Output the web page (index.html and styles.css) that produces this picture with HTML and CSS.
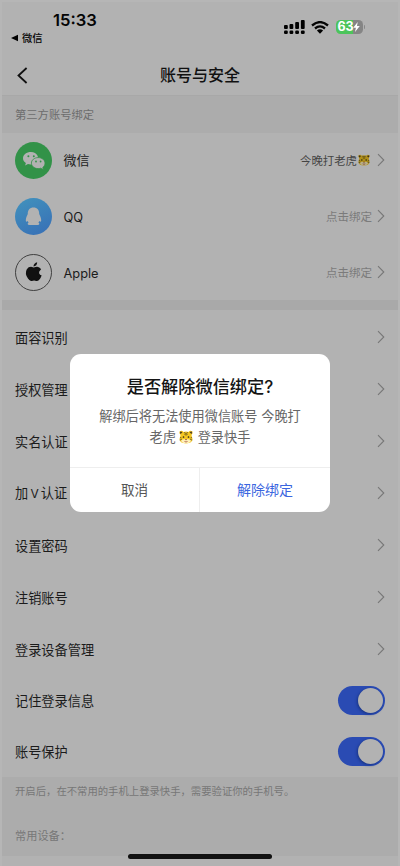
FILE: index.html
```html
<!DOCTYPE html>
<html lang="zh-CN">
<head>
<meta charset="utf-8">
<title>账号与安全</title>
<link rel="stylesheet" href="styles.css">
</head>
<body>
<svg class="defs" width="0" height="0">
  <symbol id="chevron" viewBox="0 0 8 14"><path d="M1 1.2 6.8 7 1 12.8" fill="none" stroke="currentColor" stroke-width="1.1"/></symbol>
  <symbol id="tiger" viewBox="0 0 28 28">
    <path d="M1 3q5-3 8 1 5-2 10 0 3-4 8-1 1 4-2 7l2 8q0 8-13 9Q1 26 1 18l2-8Q0 7 1 3Z" fill="#f5c722"/>
    <path d="M2 3.500q3-1 5 1.500l-4 3Q1 6 2 3.500ZM26 3.500q-3-1-5 1.500l4 3q2-2 1-4.500Z" fill="#544322"/>
    <path d="M4 21q5-4 10-2 5-2 10 2-2 5-10 6-8-1-10-6Z" fill="#fff1bc"/>
    <path d="M10 5l4 2 4-2M11 9l3 1 3-1M2 15l3 1M1.500 20l4-1M26 15l-3 1M26.500 20l-4-1" fill="none" stroke="#34301d" stroke-width="1.300"/>
    <circle cx="9" cy="14" r="1.7" fill="#26231c"/><circle cx="19" cy="14" r="1.7" fill="#26231c"/>
    <path d="M12 18h4l-2 3Z" fill="#8d4438"/><path d="M11 23q3 2 6 0" fill="none" stroke="#a34b35" stroke-width="1.600"/>
  </symbol>
</svg>
<div class="screen">
  <header class="top">
    <div class="status">
      <div class="clock"><div class="time">15:33</div><div class="back-app"><svg width="8" height="8" viewBox="0 0 8 8"><path d="M0 4 7 .7v6.6Z"/></svg>微信</div></div>
      <div class="indicators">
        <svg class="signal" width="22" height="15" viewBox="0 0 22 15"><g><rect x="0" y="5" width="3.8" height="4" rx="1"/><rect x="5.5" y="4" width="3.8" height="5" rx="1"/><rect x="11.2" y="2" width="3.8" height="7" rx="1"/><rect x="16.9" y="0" width="3.8" height="9" rx="1"/><rect x="0" y="10.5" width="3.8" height="3.5" rx="1.2"/><rect x="5.5" y="10.5" width="3.8" height="3.5" rx="1.2"/><rect x="11.2" y="10.5" width="3.8" height="3.5" rx="1.2"/><rect x="16.9" y="10.5" width="3.8" height="3.5" rx="1.2"/></g></svg>
        <svg class="wifi" width="18" height="13" viewBox="0 0 18 13"><path d="M1 4.5Q9-2.3 17 4.5M4 7.5q5-4.2 10 0" fill="none" stroke="#050505" stroke-width="2.3"/><path d="M5.9 9.6q3.1-2.5 6.2 0L9 12.8Z"/></svg>
        <div class="battery"><span>63</span><svg width="7" height="10" viewBox="0 0 7 10"><path d="M4.7 0 .2 5.7h2.7L2 10l4.8-6H4Z" fill="#fff"/></svg></div><i class="battery-tip"></i>
      </div>
    </div>
    <div class="nav"><svg width="11" height="17" viewBox="0 0 11 17"><path d="M9.6 1 1.5 8.5l8.1 7.5" fill="none" stroke="#111" stroke-width="1.8"/></svg><h1>账号与安全</h1></div>
  </header>
  <div class="section-title">第三方账号绑定</div>
  <section class="accounts">
    <div class="account">
      <svg class="logo" viewBox="0 0 37 37"><circle cx="18.5" cy="18.5" r="18.5" fill="#329248"/><path d="M16 10.1c-4.5 0-8 2.7-8 6.2 0 2 1.1 3.700 2.900 4.800l-.8 2.400 2.900-1.500q1.400.5 3.500.4h4C26 16 22 10.100 16 10.100Z" fill="#b2b2b2"/><path d="M23.2 15.6c-3.9 0-6.8 2.5-6.8 5.5s2.9 5.5 6.8 5.5q1.3 0 2.4-.4l2.8 1.4-.6-2.2c1.4-1 2.2-2.6 2.2-4.3 0-3-2.9-5.5-6.8-5.5Z" fill="#b2b2b2" stroke="#329248" stroke-width=".8"/><g fill="#329248"><circle cx="13.4" cy="14.2" r="1"/><circle cx="18.8" cy="14.2" r="1"/><circle cx="21" cy="19.5" r=".9"/><circle cx="25.6" cy="19.5" r=".9"/></g></svg>
      <span class="name">微信</span><span class="value bound">今晚打老虎<svg class="tiger dim" width="12" height="12"><use href="#tiger"/></svg></span><svg class="chevron"><use href="#chevron"/></svg>
    </div>
    <div class="account">
      <svg class="logo" viewBox="0 0 37 37"><defs><linearGradient id="qq" x2="0.5" y2="1"><stop stop-color="#4293bd"/><stop offset="1" stop-color="#3974b7"/></linearGradient></defs><circle cx="18.5" cy="18.5" r="18.5" fill="url(#qq)"/><path d="M18.5 9.500c-3.700 0-5.900 2.700-5.700 6.500-.9 2-2 4-2 6.300 0 1.600.8 1.900 1.900.6q.2.900.9 1.700c-1.500.8-1.200 2.400.7 2.400h8.400c1.900 0 2.200-1.600.7-2.400q.7-.8.9-1.700c1.100 1.300 1.900 1 1.900-.6 0-2.300-1.100-4.300-2-6.300.2-3.800-2-6.500-5.700-6.500Z" fill="#b2b2b2"/></svg>
      <span class="name latin">QQ</span><span class="value">点击绑定</span><svg class="chevron"><use href="#chevron"/></svg>
    </div>
    <div class="account">
      <svg class="logo" viewBox="0 0 37 37"><circle cx="18.5" cy="18.5" r="18" fill="none" stroke="#333" stroke-width=".9"/><g transform="translate(-3.6 -2.2) scale(1.13)"><path transform="translate(9.6 8.6) scale(.76)" d="M18.7 12.7c0-2.4 2-3.6 2.1-3.7-1.2-1.7-3-1.9-3.6-2-1.5-.2-3 .9-3.8.9s-2-.9-3.2-.9c-1.7 0-3.2 1-4.1 2.4-1.7 3-.4 7.5 1.3 10 .8 1.2 1.8 2.5 3.1 2.5s1.7-.8 3.3-.8c1.5 0 1.900.8 3.200.8s2.200-1.200 3-2.400c1-1.400 1.400-2.700 1.400-2.800-.1 0-2.700-1-2.700-4Z" fill="#111" stroke="#111" stroke-width="1.8"/><path d="M19.500 13c0-2 1.500-3.300 3.300-3.700.1 2-1.200 3.600-3.300 3.700Z" fill="#111"/></g></svg>
      <span class="name latin">Apple</span><span class="value">点击绑定</span><svg class="chevron"><use href="#chevron"/></svg>
    </div>
  </section>
  <div class="divider"></div>
  <section class="settings">
    <div class="row"><span>面容识别</span><svg class="chevron"><use href="#chevron"/></svg></div>
    <div class="row"><span>授权管理</span><svg class="chevron"><use href="#chevron"/></svg></div>
    <div class="row"><span>实名认证</span><svg class="chevron"><use href="#chevron"/></svg></div>
    <div class="row"><span>加<b class="vee">V</b>认证</span><svg class="chevron"><use href="#chevron"/></svg></div>
    <div class="row"><span>设置密码</span><svg class="chevron"><use href="#chevron"/></svg></div>
    <div class="row"><span>注销账号</span><svg class="chevron"><use href="#chevron"/></svg></div>
    <div class="row"><span>登录设备管理</span><svg class="chevron"><use href="#chevron"/></svg></div>
    <div class="row toggle-row"><span>记住登录信息</span><i class="toggle"></i></div>
    <div class="row toggle-row"><span>账号保护</span><i class="toggle"></i></div>
  </section>
  <footer class="note"><p>开启后，在不常用的手机上登录快手，需要验证你的手机号。</p><p class="devices">常用设备：</p></footer>
  <div class="home"></div>
  <div class="dialog">
    <div class="message"><h2>是否解除微信绑定?</h2><p>解绑后将无法使用微信账号 今晚打<br>老虎<svg class="tiger" width="14" height="14"><use href="#tiger"/></svg> 登录快手</p></div>
    <div class="actions"><div class="cancel">取消</div><div class="confirm">解除绑定</div></div>
  </div>
</div>
</body>
</html>
```

FILE: styles.css
```css
* { box-sizing: border-box; }
body { margin: 0; font-family: Inter, "Noto Sans CJK SC", sans-serif; background: #b2b2b2; }
h1, h2, p { margin: 0; }
.defs { position: absolute; }
.screen { position: relative; width: 400px; height: 866px; overflow: hidden; background: #b2b2b2; color: #1b1b1b; border: 0 solid #b6b6b6; border-width: 2px 2px 0; display: flex; flex-direction: column; }
.top { height: 93px; flex: none; }
.status { height: 48px; display: flex; justify-content: space-between; color: #050505; }
.clock { padding-left: 9px; }
.time { padding-left: 42px; margin-top: 8px; font-size: 16.6px; line-height: 20px; font-weight: 600; }
.back-app { display: flex; align-items: center; gap: 3px; font-size: 10.3px; line-height: 14px; margin-top: 1px; font-weight: 500; }
.indicators { display: flex; align-items: center; height: 16px; margin-top: 17px; padding-right: 33px; }
.wifi { margin-left: 5px; }
.battery { margin-left: 7px; width: 27px; height: 14px; border-radius: 4.5px; display: flex; align-items: center; justify-content: center; background: linear-gradient(90deg, #4cc45b 63%, #858585 63%); color: #fff; font-size: 12.5px; line-height: 14px; font-weight: 700; letter-spacing: -.2px; }
.battery-tip { width: 1.5px; height: 4px; margin-left: 1px; border-radius: 0 2px 2px 0; background: #888; }
.nav { display: flex; align-items: center; height: 30px; margin-top: 10px; padding-left: 15px; }
.nav svg { margin-top: 1px; }
.nav h1 { margin: 0 0 0 132px; font-size: 16px; line-height: 24px; font-weight: 500; color: #111; }
.section-title { height: 38px; flex: none; background: #acacac; border-top: 1px solid #a8a8a8; padding-left: 13px; line-height: 38px; font-size: 11.3px; color: #6d6d6d; }
.accounts { height: 167px; flex: none; }
.account { height: 56px; display: flex; align-items: center; padding: 0 13px; }
.account > * { position: relative; top: -.6px; }
.logo { width: 37px; height: 37px; }
.name { margin-left: 11.5px; font-size: 13px; line-height: 20px; }
.account .latin { font-size: 12.8px; top: .6px; }
.value { margin-left: auto; display: flex; align-items: center; font-size: 11.5px; color: #7b7b7b; }
.bound { color: #444; font-size: 11.4px; }
.tiger { flex: none; }
.bound .tiger { margin: 0 2px 0 1px; }
.dim { filter: brightness(.72); }
.chevron { width: 8px; height: 14px; color: #777; flex: none; }
.account .chevron { margin-left: 5px; }
.divider { height: 10px; flex: none; background: #a9a9a9; }
.settings { padding-top: 1.5px; height: 467px; flex: none; }
.row { display: flex; justify-content: space-between; align-items: center; height: 52px; padding: 0 13px; font-size: 13.2px; line-height: 20px; }
.row .chevron, .toggle { margin-bottom: 1.5px; }
.vee { font-size: 12px; font-weight: 400; margin: 0 2.2px; }
.toggle-row { height: 51px; }
.toggle { width: 47px; height: 29px; border-radius: 15px; background: #2a4bb3; display: flex; justify-content: flex-end; padding: 2px; }
.toggle::before { content: ""; width: 25px; height: 25px; border-radius: 50%; background: #b2b2b2; box-shadow: -1px 1px 3px #193585; }
.note { height: 79px; flex: none; background: #acacac; padding: 5px 13px 0; color: #777; font-size: 10.35px; line-height: 18px; }
.devices { margin-top: 27px; font-size: 11.2px; }
.home { position: absolute; left: 126px; top: 852px; width: 144px; height: 5px; border-radius: 3px; background: #111; }
.dialog { position: absolute; left: 68px; top: 352px; width: 260px; height: 158px; border-radius: 11px; overflow: hidden; background: #fff; text-align: center; }
.message { height: 113px; padding-top: 20px; }
.message h2 { font-size: 17.2px; line-height: 25px; font-weight: 500; color: #151515; }
.message p { margin-top: 7px; font-size: 13.2px; line-height: 21px; color: #666; }
.message .tiger { vertical-align: -2px; margin: 0 1px 0 3px; }
.actions { height: 45px; display: grid; grid-template-columns: 1fr 1fr; border-top: 1px solid #eee; font-size: 14px; line-height: 44px; }
.cancel { color: #555; border-right: 1px solid #eee; font-size: 13.6px; }
.confirm { color: #3b66df; }
```
